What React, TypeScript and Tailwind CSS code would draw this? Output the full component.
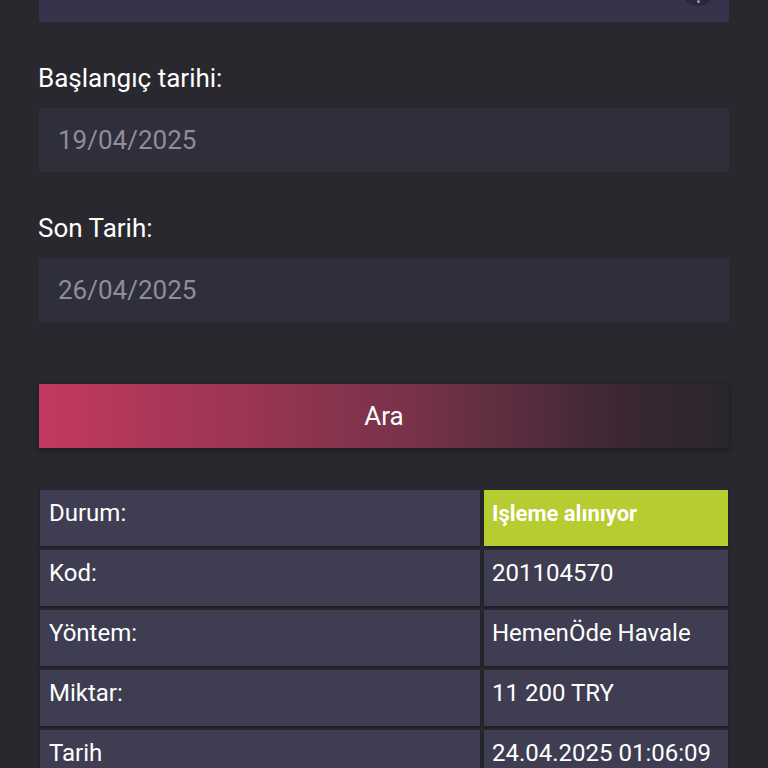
export default function App() {
  const rows: { label: string; value: string; status?: boolean }[] = [
    { label: 'Durum:', value: 'Işleme alınıyor', status: true },
    { label: 'Kod:', value: '201104570' },
    { label: 'Yöntem:', value: 'HemenÖde Havale' },
    { label: 'Miktar:', value: '11 200 TRY' },
    { label: 'Tarih', value: '24.04.2025 01:06:09' },
  ]

  return (
    <div
      className="w-[768px] h-[768px] overflow-hidden bg-[#29282f] text-white"
      style={{ fontFamily: 'Roboto, "Noto Sans", sans-serif' }}
    >
      <div className="pl-[39px] pr-[39px]">
        {/* field cut off at the top */}
        <div className="mt-[-42px] h-[64px] bg-[#36344a] relative">
          <div className="absolute right-[14px] top-[14px] w-[34px] h-[34px] rounded-full bg-[#29283a] flex items-end justify-center pb-[3px]">
            <div className="w-[3px] h-[3px] rounded-full bg-[#9a99a8]" />
          </div>
        </div>

        <div className="mt-[41px] text-[26px] leading-[30px] ml-[-1px]">Başlangıç tarihi:</div>
        <div className="mt-[15px] h-[64px] bg-[#2f2e3b] flex items-center pl-[19px] text-[26px] text-[#8e8d98]">
          19/04/2025
        </div>

        <div className="mt-[41px] text-[26px] leading-[30px] ml-[-1px]">Son Tarih:</div>
        <div className="mt-[15px] h-[64px] bg-[#2f2e3b] flex items-center pl-[19px] text-[26px] text-[#8e8d98]">
          26/04/2025
        </div>

        <button className="mt-[62px] w-full h-[64px] bg-[linear-gradient(to_right,#c3395f,#9a3552_30%,#763249_55%,#3a2733_85%,#29262d)] shadow-[0_2px_6px_rgba(0,0,0,0.35)] text-[26px] text-white flex items-center justify-center">
          Ara
        </button>

        <div className="mt-[42px] ml-[1px] mr-[1px] flex flex-col gap-[4px]">
          {rows.map((r) => (
            <div key={r.label} className="flex gap-[4px] h-[56px]">
              <div className="w-[440px] bg-[#3e3d52] pl-[9px] pt-[9px] text-[24px] leading-[28px] shadow-[0_1px_2px_rgba(0,0,0,0.4)]">
                {r.label}
              </div>
              <div
                className={
                  r.status
                    ? 'flex-1 bg-[#b6cc30] pl-[8px] pt-[10px] text-[22px] leading-[28px] font-bold shadow-[0_1px_2px_rgba(0,0,0,0.4)]'
                    : 'flex-1 bg-[#3e3d52] pl-[8px] pt-[9px] text-[24px] leading-[28px] shadow-[0_1px_2px_rgba(0,0,0,0.4)]'
                }
              >
                {r.value}
              </div>
            </div>
          ))}
        </div>
      </div>
    </div>
  )
}
